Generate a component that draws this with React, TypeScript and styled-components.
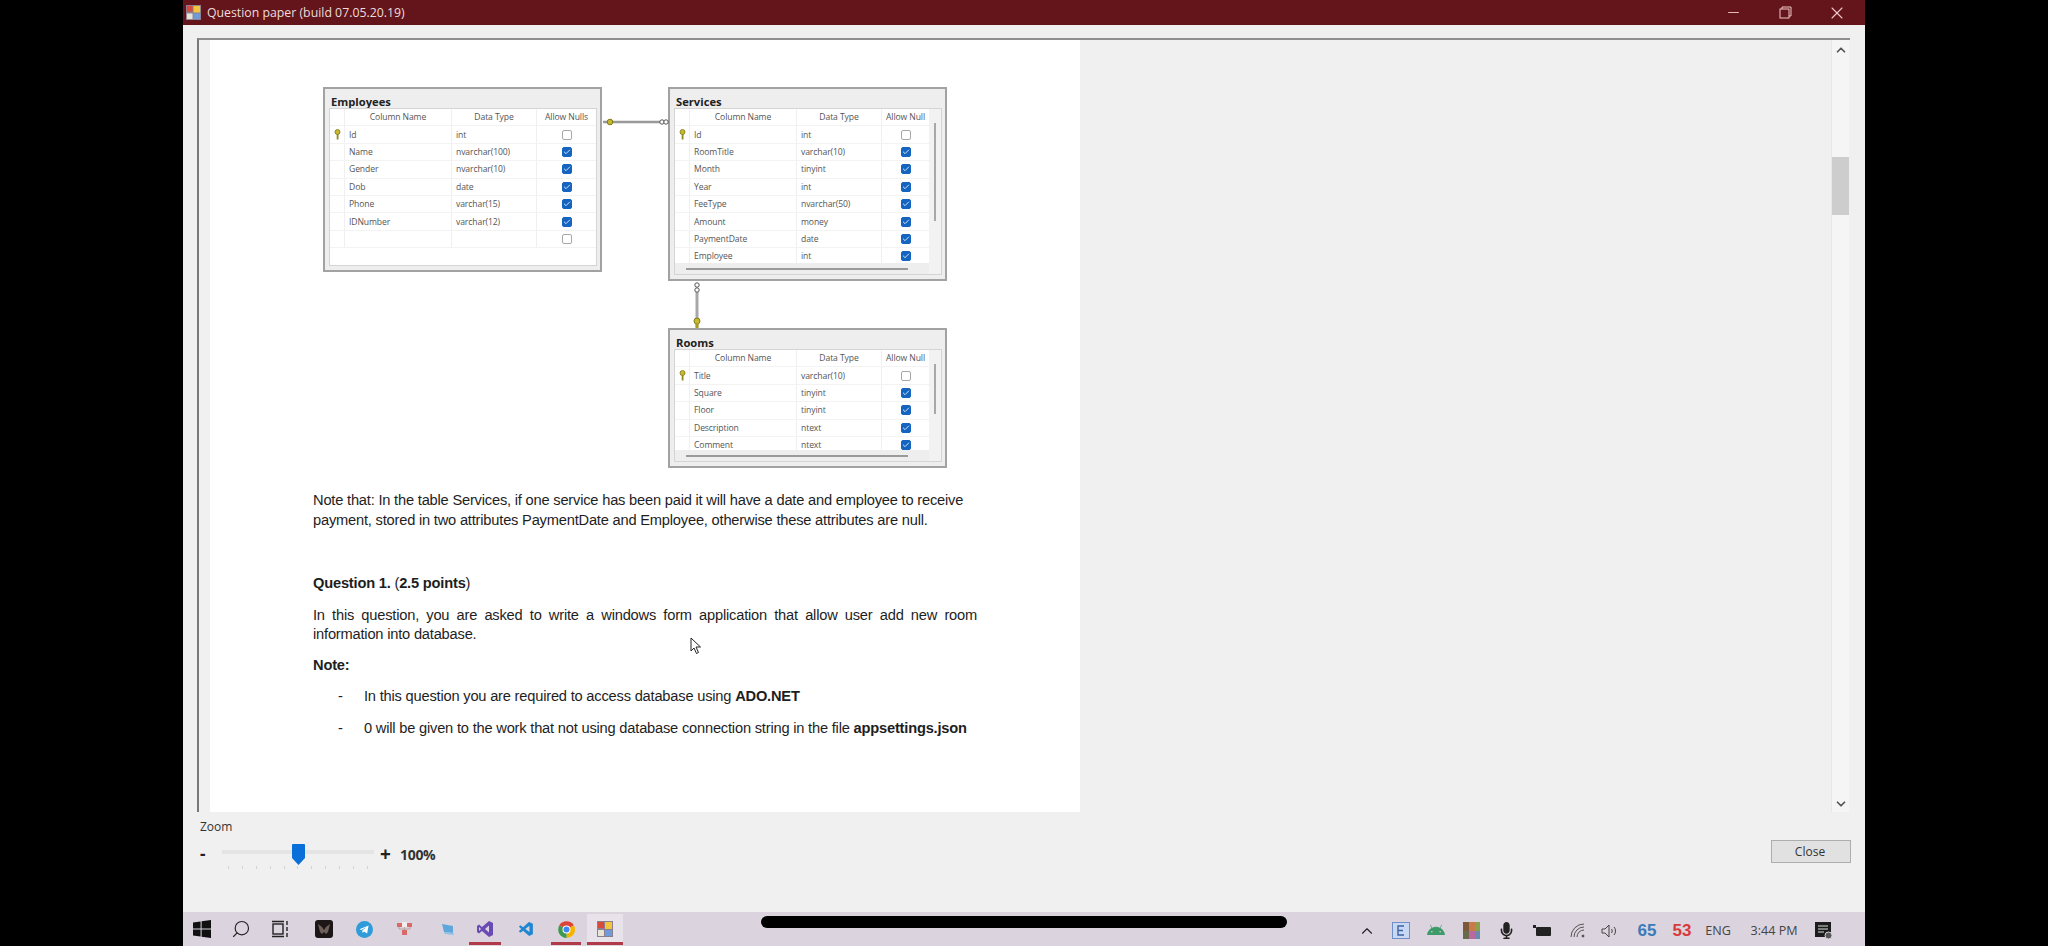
import React from "react";
import styled, { createGlobalStyle } from "styled-components";
import { FaAndroid, FaMicrophone } from "react-icons/fa";
import { VscVscode } from "react-icons/vsc";
import { ChevronUp, ChevronDown, Search, Minus, X, Check } from "lucide-react";

const GlobalStyle = createGlobalStyle`
  html, body { margin: 0; padding: 0; background: #000; }
  body { font-family: "Open Sans", "Liberation Sans", sans-serif; }
`;

const Screen = styled.div`
  width: 2048px;
  height: 946px;
  overflow: hidden;
  background: #000;
  display: flex;
  justify-content: flex-start;
  padding-left: 183px;
  box-sizing: border-box;
  position: relative;
`;

const Window = styled.div`
  width: 1682px;
  height: 946px;
  background: #f0f0f0;
  display: flex;
  flex-direction: column;
`;

const TitleBar = styled.div`
  height: 25px;
  flex: none;
  background: #64141b;
  display: flex;
  align-items: center;
  padding: 0 2px 0 3px;
  color: #ecdcdc;
  font-size: 12.3px;
`;

const TitleText = styled.span`
  margin-left: 6px;
  flex: 1;
`;

const WinControl = styled.div`
  width: 52px;
  display: flex;
  justify-content: center;
  color: #f0c8c8;
`;

const Content = styled.div`
  flex: 1;
  display: flex;
  flex-direction: column;
  min-height: 0;
`;

const ViewerFrame = styled.div`
  height: 774px;
  margin: 13px 15px 0 14px;
  border-top: 2px solid #8f8f8f;
  border-left: 2px solid #777;
  display: flex;
  box-sizing: border-box;
  background: #f0f0f0;
`;

const Gutter = styled.div`
  width: 11px;
  flex: none;
  background: #f0f0f0;
`;

const Page = styled.div`
  width: 870px;
  flex: none;
  background: #fff;
  position: relative;
  box-sizing: border-box;
  padding: 47px 0 0 113px;
`;

const Rest = styled.div`
  flex: 1;
  background: #f0f0f0;
  border-right: 1px solid #e6e6e6;
`;

const VScroll = styled.div`
  width: 17px;
  flex: none;
  margin-right: 1px;
  padding: 3px 0 1px;
  box-sizing: border-box;
  background: #f5f5f5;
  display: flex;
  flex-direction: column;
  align-items: center;
  color: #555;
`;

const VThumb = styled.div`
  width: 17px;
  height: 58px;
  margin-top: 100px;
  background: #cdcdcd;
`;

const Spacer = styled.div`
  flex: 1;
`;

const Diagram = styled.div`
  display: grid;
  grid-template-columns: 279px 279px;
  column-gap: 66px;
  row-gap: 47px;
  width: 624px;
  position: relative;
  align-items: start;
`;

const TableBox = styled.div<{ $h: number }>`
  height: ${(p) => p.$h}px;
  box-sizing: border-box;
  background: #eeeeee;
  border: 2px solid #a2a2a2;
  padding: 0 3px 4px 4px;
  display: flex;
  flex-direction: column;
  overflow: hidden;
`;

const TableTitle = styled.div`
  font-size: 11.2px;
  font-weight: 700;
  color: #222;
  height: 19px;
  line-height: 26px;
  padding-left: 2px;
  flex: none;
`;

const TableInner = styled.div`
  flex: 1;
  min-height: 0;
  background: #fff;
  border: 1px solid #d4d4d4;
  display: flex;
  position: relative;
  overflow: hidden;
`;

const GridArea = styled.div`
  flex: 1;
  min-width: 0;
  overflow: hidden;
`;

const Row = styled.div`
  display: grid;
  grid-template-columns: 14px 107px 85px 1fr;
  height: 17.4px;
  border-bottom: 1px solid #f3f3f3;
  box-sizing: border-box;
`;

const Cell = styled.div<{ $center?: boolean }>`
  font-size: 8.6px;
  letter-spacing: -0.1px;
  line-height: 16px;
  color: #555;
  border-left: 1px solid #f0f0f0;
  padding-left: ${(p) => (p.$center ? "0" : "4px")};
  white-space: nowrap;
  overflow: hidden;
  display: flex;
  align-items: center;
  justify-content: ${(p) => (p.$center ? "center" : "flex-start")};
`;

const KeyCell = styled.div`
  display: flex;
  align-items: center;
  justify-content: center;
`;

const CheckBox = styled.div<{ $on: boolean }>`
  width: 10px;
  height: 10px;
  border-radius: 2px;
  box-sizing: border-box;
  border: 1px solid ${(p) => (p.$on ? "#1565c0" : "#a8a8a8")};
  background: ${(p) => (p.$on ? "#1565c0" : "#fff")};
  display: flex;
  align-items: center;
  justify-content: center;
  color: #cfe2f8;
`;

const SideBar = styled.div`
  width: 12px;
  flex: none;
  background: #f2f2f2;
  display: flex;
  justify-content: center;
`;

const SideThumb = styled.div<{ $h: number }>`
  width: 2px;
  height: ${(p) => p.$h}px;
  margin-top: 14px;
  background: #a8a8a8;
`;

const BottomBand = styled.div`
  position: absolute;
  left: 0;
  right: 12px;
  bottom: 0;
  height: 11px;
  background: #eeeeee;
  display: flex;
  align-items: center;
  padding-left: 11px;
`;

const BottomThumb = styled.div`
  width: 222px;
  height: 2px;
  background: #9a9a9a;
`;

const Connectors = styled.svg`
  position: absolute;
  left: 0;
  top: 0;
  pointer-events: none;
`;

const Prose = styled.div`
  width: 664px;
  margin-left: -10px;
  margin-top: 23px;
  font-family: "Liberation Sans", Arial, sans-serif;
  font-size: 14.67px;
  line-height: 19.5px;
  color: #1e1e1e;
`;

const Para = styled.p<{ $gap: number; $justify?: boolean }>`
  margin: ${(p) => p.$gap}px 0 0;
  text-align: ${(p) => (p.$justify ? "justify" : "left")};
  letter-spacing: -0.2px;
`;

const Bullet = styled.div`
  display: flex;
  margin-top: 12px;
  padding-left: 25px;
  letter-spacing: -0.2px;
`;

const Dash = styled.span`
  width: 26px;
  flex: none;
`;

const Cursor = styled.svg`
  position: absolute;
  left: 480px;
  top: 597px;
`;

const Footer = styled.div`
  flex: 1;
  display: flex;
  flex-direction: column;
  padding: 6px 14px 0 17px;
  position: relative;
`;

const ZoomLabel = styled.div`
  font-size: 12px;
  color: #333;
  line-height: 17px;
`;

const ZoomRow = styled.div`
  display: flex;
  align-items: flex-start;
  margin-top: 9px;
`;

const Sign = styled.span`
  width: 22px;
  font-size: 17px;
  font-weight: 700;
  color: #222;
  line-height: 20px;
`;

const Slider = styled.div`
  width: 152px;
  height: 30px;
  position: relative;
`;

const Track = styled.div`
  position: absolute;
  left: 0;
  right: 0;
  top: 6px;
  height: 4px;
  background: #e4e4e4;
`;

const Thumb = styled.svg`
  position: absolute;
  left: 70px;
  top: 0;
`;

const Ticks = styled.div`
  position: absolute;
  left: 6px;
  right: 6px;
  top: 22px;
  display: flex;
  justify-content: space-between;
`;

const Tick = styled.i`
  width: 1px;
  height: 3px;
  background: #d4d4d4;
`;

const Plus = styled(Sign)`
  width: 20px;
  margin-left: 6px;
  font-size: 19px;
`;

const Percent = styled.span`
  font-size: 14px;
  font-weight: 700;
  letter-spacing: -0.3px;
  color: #333;
  line-height: 21px;
`;

const CloseButton = styled.button`
  position: absolute;
  right: 14px;
  top: 28px;
  width: 80px;
  height: 23px;
  padding: 0 2px 0 0;
  background: #e1e1e1;
  border: 1px solid #adadad;
  font-family: "Open Sans", sans-serif;
  font-size: 12px;
  color: #333;
`;

const Taskbar = styled.div`
  height: 34px;
  flex: none;
  background: #dbd4df;
  display: flex;
  align-items: center;
  position: relative;
  padding-top: 3px;
  box-sizing: border-box;
`;

const Tasks = styled.div`
  display: flex;
  align-items: stretch;
  height: 100%;
  margin-top: -3px;
`;

const Task = styled.div<{ $w: number; $ml?: number; $open?: boolean; $active?: boolean }>`
  width: ${(p) => p.$w}px;
  margin-left: ${(p) => p.$ml ?? 0}px;
  display: flex;
  align-items: center;
  justify-content: center;
  box-sizing: border-box;
  padding-top: 3px;
  background: ${(p) => (p.$active ? "#e8e3ea" : "transparent")};
  border-bottom: 3px solid ${(p) => (p.$open ? "#b03a48" : "transparent")};
`;

const Pill = styled.div`
  position: absolute;
  left: 578px;
  top: 4px;
  width: 526px;
  height: 12px;
  border-radius: 6px;
  background: #000;
`;

const Tray = styled.div`
  margin-left: auto;
  display: flex;
  align-items: center;
  color: #222;
  padding-right: 26px;
`;

const TrayItem = styled.div<{ $w: number }>`
  width: ${(p) => p.$w}px;
  display: flex;
  justify-content: center;
  align-items: center;
`;

const TrayNum = styled.span<{ $c: string }>`
  font-size: 17px;
  font-weight: 700;
  font-family: "Liberation Sans", sans-serif;
  color: ${(p) => p.$c};
`;

const TrayText = styled.span`
  font-size: 12.6px;
  color: #444;
  white-space: nowrap;
`;

type Col = [string, string, boolean, boolean?];

const employees: Col[] = [
  ["Id", "int", false, true],
  ["Name", "nvarchar(100)", true],
  ["Gender", "nvarchar(10)", true],
  ["Dob", "date", true],
  ["Phone", "varchar(15)", true],
  ["IDNumber", "varchar(12)", true],
  ["", "", false],
];

const services: Col[] = [
  ["Id", "int", false, true],
  ["RoomTitle", "varchar(10)", true],
  ["Month", "tinyint", true],
  ["Year", "int", true],
  ["FeeType", "nvarchar(50)", true],
  ["Amount", "money", true],
  ["PaymentDate", "date", true],
  ["Employee", "int", true],
];

const rooms: Col[] = [
  ["Title", "varchar(10)", false, true],
  ["Square", "tinyint", true],
  ["Floor", "tinyint", true],
  ["Description", "ntext", true],
  ["Comment", "ntext", true],
];

function KeyIcon() {
  return (
    <svg width="7" height="11" viewBox="0 0 7 11">
      <circle cx="3.5" cy="3" r="2.5" fill="#c9b92e" stroke="#7d7a1a" strokeWidth="0.8" />
      <rect x="2.7" y="5" width="1.8" height="5.5" fill="#8f8a20" />
    </svg>
  );
}

function DbTable({
  title,
  cols,
  height,
  lastHeader,
  thumb,
}: {
  title: string;
  cols: Col[];
  height: number;
  lastHeader: string;
  thumb?: number;
}) {
  return (
    <TableBox $h={height}>
      <TableTitle>{title}</TableTitle>
      <TableInner>
        <GridArea>
          <Row>
            <KeyCell />
            <Cell $center>Column Name</Cell>
            <Cell $center>Data Type</Cell>
            <Cell $center>{lastHeader}</Cell>
          </Row>
          {cols.map((c, i) => (
            <Row key={i}>
              <KeyCell>{c[3] && <KeyIcon />}</KeyCell>
              <Cell>{c[0]}</Cell>
              <Cell>{c[1]}</Cell>
              <Cell $center>
                <CheckBox $on={c[2]}>{c[2] && <Check size={8} strokeWidth={3} />}</CheckBox>
              </Cell>
            </Row>
          ))}
        </GridArea>
        {thumb && (
          <>
            <SideBar>
              <SideThumb $h={thumb} />
            </SideBar>
            <BottomBand>
              <BottomThumb />
            </BottomBand>
          </>
        )}
      </TableInner>
    </TableBox>
  );
}

function AppIcon({ size = 15 }: { size?: number }) {
  return (
    <svg width={size} height={size} viewBox="0 0 16 16">
      <rect width="16" height="16" fill="#8a7f90" />
      <rect x="1" y="1" width="6" height="6" fill="#d94a3a" />
      <rect x="8" y="1" width="7" height="7" fill="#f2c53d" />
      <rect x="1" y="9" width="6" height="6" fill="#e8e4d8" />
      <rect x="8" y="9" width="7" height="6" fill="#6f9bd8" />
    </svg>
  );
}

function WindowsIcon() {
  return (
    <svg width="18" height="18" viewBox="0 0 18 18" fill="#111">
      <path d="M0 2.5l7.6-1.1v7H0zM8.6 1.2L18 0v8.4H8.6zM0 9.5h7.6v7L0 15.5zM8.6 9.5H18V18l-9.4-1.3z" />
    </svg>
  );
}

function TaskViewIcon() {
  return (
    <svg width="18" height="18" viewBox="0 0 18 18" fill="none" stroke="#222" strokeWidth="1.4">
      <rect x="1" y="4" width="10" height="10" />
      <path d="M0 1.5h12M0 16.5h12M15 1v4M15 7v4M15 13v4" />
    </svg>
  );
}

function TelegramIcon() {
  return (
    <svg width="17" height="17" viewBox="0 0 17 17">
      <circle cx="8.5" cy="8.5" r="8.5" fill="#2f9bd9" />
      <path d="M3.4 8.3l9.2-3.7-1.5 8-3-2.1-1.5 1.5-.3-2.5 4.3-3.6-5.3 3.2z" fill="#fff" />
    </svg>
  );
}

function StudioIcon() {
  return (
    <svg width="18" height="18" viewBox="0 0 18 18">
      <path d="M13 1l4 2v12l-4 2-7-6-3 2.5L1 12V6l2-1.5L6 7zM13 5.5L9 9l4 3.5zM3 7v4l2-2z" fill="#6a4bb3" fillRule="evenodd" />
    </svg>
  );
}

function ChromeIcon() {
  return (
    <svg width="17" height="17" viewBox="0 0 17 17">
      <path d="M8.5 8.5L1.3 4.3A8.5 8.5 0 0 1 15.9 4.3z" fill="#db4437" />
      <path d="M8.5 8.5L15.9 4.3A8.5 8.5 0 0 1 8.5 17z" fill="#f4b400" />
      <path d="M8.5 8.5V17A8.5 8.5 0 0 1 1.3 4.3z" fill="#3f9a4f" />
      <circle cx="8.5" cy="8.5" r="4" fill="#fff" />
      <circle cx="8.5" cy="8.5" r="3" fill="#4285f4" />
    </svg>
  );
}

function NotificationIcon() {
  return (
    <svg width="18" height="18" viewBox="0 0 18 18">
      <rect x="0" y="0" width="16" height="15" fill="#1c1c1c" />
      <path d="M3 4h10M3 7h10M3 10h6" stroke="#ddd" />
      <circle cx="13.5" cy="13.5" r="3.5" fill="#555" stroke="#dbd4df" />
    </svg>
  );
}

export default function App() {
  return (
    <Screen>
      <GlobalStyle />
      <Window>
        <TitleBar>
          <AppIcon />
          <TitleText>Question paper (build 07.05.20.19)</TitleText>
          <WinControl>
            <Minus size={17} strokeWidth={1.3} />
          </WinControl>
          <WinControl>
            <svg width="13" height="13" viewBox="0 0 13 13" fill="none" stroke="currentColor">
              <rect x="1" y="3" width="9" height="9" />
              <path d="M3 3V1h9v9h-2" />
            </svg>
          </WinControl>
          <WinControl>
            <X size={20} strokeWidth={1.3} />
          </WinControl>
        </TitleBar>
        <Content>
          <ViewerFrame>
            <Gutter />
            <Page>
              <Diagram>
                <DbTable title="Employees" cols={employees} height={185} lastHeader="Allow Nulls" />
                <DbTable title="Services" cols={services} height={194} lastHeader="Allow Null" thumb={98} />
                <div />
                <DbTable title="Rooms" cols={rooms} height={140} lastHeader="Allow Null" thumb={50} />
                <Connectors width="624" height="300">
                  <path d="M280 35h57" stroke="#999" strokeWidth="2.4" fill="none" />
                  <circle cx="287" cy="35" r="2.8" fill="#c9b92e" stroke="#7d7a1a" />
                  <circle cx="339" cy="35" r="2.2" fill="#fff" stroke="#555" />
                  <circle cx="343" cy="35" r="2.2" fill="#fff" stroke="#555" />
                  <path d="M374 204v36" stroke="#a8a8a8" strokeWidth="3" fill="none" />
                  <circle cx="374" cy="198" r="2.2" fill="#fff" stroke="#555" />
                  <circle cx="374" cy="203" r="2.2" fill="#fff" stroke="#555" />
                  <circle cx="374" cy="234" r="3" fill="#c9b92e" stroke="#7d7a1a" />
                  <rect x="372.5" y="236" width="3" height="5" fill="#a89c20" />
                </Connectors>
              </Diagram>
              <Prose>
                <Para $gap={0}>
                  Note that: In the table Services, if one service has been paid it will have a date and employee to receive
                  <br />
                  payment, stored in two attributes PaymentDate and Employee, otherwise these attributes are null.
                </Para>
                <Para $gap={44}>
                  <b>Question 1.</b> (<b>2.5 points</b>)
                </Para>
                <Para $gap={12} $justify>
                  In this question, you are asked to write a windows form application that allow user add new room information into database.
                </Para>
                <Para $gap={11}>
                  <b>Note:</b>
                </Para>
                <Bullet>
                  <Dash>-</Dash>
                  <span>
                    In this question you are required to access database using <b>ADO.NET</b>
                  </span>
                </Bullet>
                <Bullet>
                  <Dash>-</Dash>
                  <span>
                    0 will be given to the work that not using database connection string in the file <b>appsettings.json</b>
                  </span>
                </Bullet>
              </Prose>
              <Cursor width="12" height="18" viewBox="0 0 12 18">
                <path d="M1 1v13l3-3 2.5 5.5 2-1L6 10h4.5z" fill="#fff" stroke="#222" strokeWidth="1" />
              </Cursor>
            </Page>
            <Rest />
            <VScroll>
              <ChevronUp size={14} strokeWidth={3} />
              <VThumb />
              <Spacer />
              <ChevronDown size={14} strokeWidth={3} />
            </VScroll>
          </ViewerFrame>
          <Footer>
            <ZoomLabel>Zoom</ZoomLabel>
            <ZoomRow>
              <Sign>-</Sign>
              <Slider>
                <Track />
                <Thumb width="13" height="21" viewBox="0 0 13 21">
                  <path d="M1 0h11a1 1 0 0 1 1 1v13l-6.5 7L0 14V1a1 1 0 0 1 1-1z" fill="#0a6fd8" />
                </Thumb>
                <Ticks>
                  {Array.from({ length: 11 }).map((_, i) => (
                    <Tick key={i} />
                  ))}
                </Ticks>
              </Slider>
              <Plus>+</Plus>
              <Percent>100%</Percent>
            </ZoomRow>
            <CloseButton>Close</CloseButton>
          </Footer>
          <Taskbar>
            <Tasks>
              <Task $w={38}>
                <WindowsIcon />
              </Task>
              <Task $w={40}>
                <Search size={20} strokeWidth={1.4} color="#222" style={{ transform: "scaleX(-1)" }} />
              </Task>
              <Task $w={40}>
                <TaskViewIcon />
              </Task>
              <Task $w={46}>
                <svg width="18" height="18" viewBox="0 0 18 18">
                  <rect width="18" height="18" rx="3" fill="#1d1616" />
                  <path d="M3 4l4 3 2 3 2-3 4-3-2 8-2 2-2-2-2 2-2-2z" fill="#6e5f58" />
                </svg>
              </Task>
              <Task $w={34}>
                <TelegramIcon />
              </Task>
              <Task $w={46}>
                <svg width="17" height="14" viewBox="0 0 17 14">
                  <rect x="1" y="1" width="5" height="4" fill="#d86a6a" />
                  <rect x="6" y="0" width="5" height="5" fill="#f3ecec" />
                  <rect x="11" y="1" width="5" height="4" fill="#d86a6a" />
                  <rect x="6" y="8" width="5" height="5" fill="#d86a6a" />
                  <path d="M3 5v2h11V5M8.5 5v3" stroke="#b9a2a2" fill="none" />
                </svg>
              </Task>
              <Task $w={42}>
                <svg width="14" height="13" viewBox="0 0 14 13">
                  <path d="M1 1l11 2v7L3 9z" fill="#5ea6dc" />
                  <path d="M3 9l9 1 1 2-9-1z" fill="#8fc0e6" />
                </svg>
              </Task>
              <Task $w={32} $open>
                <StudioIcon />
              </Task>
              <Task $w={50}>
                <VscVscode size={17} color="#1f86d1" />
              </Task>
              <Task $w={30} $open>
                <ChromeIcon />
              </Task>
              <Task $w={36} $ml={6} $open $active>
                <AppIcon size={16} />
              </Task>
            </Tasks>
            <Pill />
            <Tray>
              <TrayItem $w={32}>
                <ChevronUp size={18} strokeWidth={1.5} />
              </TrayItem>
              <TrayItem $w={36}>
                <svg width="18" height="17" viewBox="0 0 18 17">
                  <rect x="0.5" y="0.5" width="17" height="16" fill="#c9d8f2" stroke="#6f8fc8" />
                  <path d="M12 4H6v9h6M6 8.5h5" stroke="#3d62a8" strokeWidth="1.4" fill="none" />
                </svg>
              </TrayItem>
              <TrayItem $w={34}>
                <FaAndroid size={18} color="#3f9a6a" />
              </TrayItem>
              <TrayItem $w={36}>
                <svg width="17" height="17" viewBox="0 0 17 17">
                  <rect width="6" height="9" fill="#7a5a3a" />
                  <rect x="6" width="6" height="9" fill="#c97a4a" />
                  <rect x="12" width="5" height="9" fill="#8aa04a" />
                  <rect y="9" width="6" height="8" fill="#6a6a4a" />
                  <rect x="6" y="9" width="6" height="8" fill="#b86aa0" />
                  <rect x="12" y="9" width="5" height="8" fill="#6a8ab0" />
                </svg>
              </TrayItem>
              <TrayItem $w={34}>
                <FaMicrophone size={17} color="#222" />
              </TrayItem>
              <TrayItem $w={38}>
                <svg width="18" height="11" viewBox="0 0 18 11">
                  <rect x="3" y="2" width="15" height="9" rx="1" fill="#222" />
                  <rect x="0" y="0" width="3" height="3" fill="#222" />
                </svg>
              </TrayItem>
              <TrayItem $w={32}>
                <svg width="15" height="15" viewBox="0 0 15 15" fill="none" stroke="#555" strokeWidth="1">
                  <path d="M1 14A13 13 0 0 1 14 1M4 14A10 10 0 0 1 14 4M7 14a7 7 0 0 1 7-7" />
                  <circle cx="13" cy="13" r="1" fill="#333" />
                </svg>
              </TrayItem>
              <TrayItem $w={34}>
                <svg width="18" height="14" viewBox="0 0 18 14" fill="none" stroke="#444" strokeWidth="1">
                  <path d="M1 5v4h3l4 4V1L4 5z" />
                  <path d="M10.5 5a3 3 0 0 1 0 4M13 3a6 6 0 0 1 0 8" />
                </svg>
              </TrayItem>
              <TrayItem $w={40}>
                <TrayNum $c="#3a7ab8">65</TrayNum>
              </TrayItem>
              <TrayItem $w={30}>
                <TrayNum $c="#d83a3a">53</TrayNum>
              </TrayItem>
              <TrayItem $w={42}>
                <TrayText>ENG</TrayText>
              </TrayItem>
              <TrayItem $w={70}>
                <TrayText>3:44 PM</TrayText>
              </TrayItem>
              <TrayItem $w={30}>
                <NotificationIcon />
              </TrayItem>
            </Tray>
          </Taskbar>
        </Content>
      </Window>
    </Screen>
  );
}
